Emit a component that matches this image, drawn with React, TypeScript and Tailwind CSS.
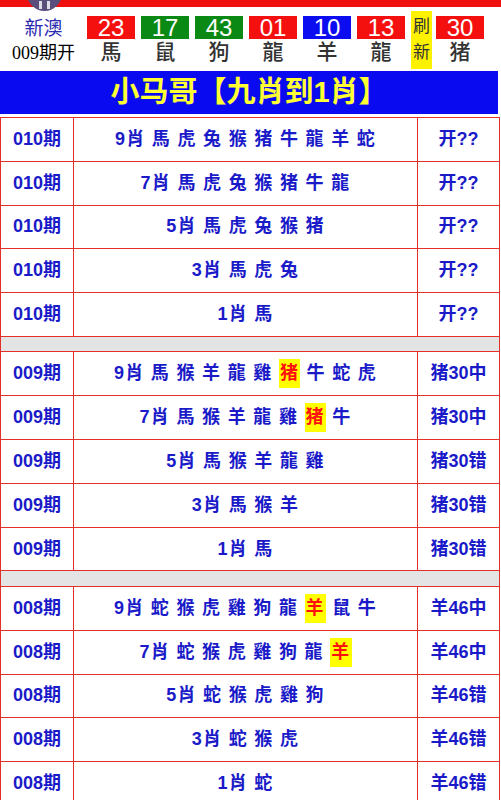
const font = "font-['Liberation_Sans','Noto_Sans_CJK_TC',sans-serif]"

const balls = [
  { n: '23', z: '馬', c: 'bg-[#f51010]' },
  { n: '17', z: '鼠', c: 'bg-[#0a8a14]' },
  { n: '43', z: '狗', c: 'bg-[#0a8a14]' },
  { n: '01', z: '龍', c: 'bg-[#f51010]' },
  { n: '10', z: '羊', c: 'bg-[#0c0cf0]' },
  { n: '13', z: '龍', c: 'bg-[#f51010]' },
]

type Row = { qi: string; picks: string; hit?: string; res: string }

const groups: Row[][] = [
  [
    { qi: '010期', picks: '9肖 馬 虎 兔 猴 猪 牛 龍 羊 蛇', res: '开??' },
    { qi: '010期', picks: '7肖 馬 虎 兔 猴 猪 牛 龍', res: '开??' },
    { qi: '010期', picks: '5肖 馬 虎 兔 猴 猪', res: '开??' },
    { qi: '010期', picks: '3肖 馬 虎 兔', res: '开??' },
    { qi: '010期', picks: '1肖 馬', res: '开??' },
  ],
  [
    { qi: '009期', picks: '9肖 馬 猴 羊 龍 雞 猪 牛 蛇 虎', hit: '猪', res: '猪30中' },
    { qi: '009期', picks: '7肖 馬 猴 羊 龍 雞 猪 牛', hit: '猪', res: '猪30中' },
    { qi: '009期', picks: '5肖 馬 猴 羊 龍 雞', res: '猪30错' },
    { qi: '009期', picks: '3肖 馬 猴 羊', res: '猪30错' },
    { qi: '009期', picks: '1肖 馬', res: '猪30错' },
  ],
  [
    { qi: '008期', picks: '9肖 蛇 猴 虎 雞 狗 龍 羊 鼠 牛', hit: '羊', res: '羊46中' },
    { qi: '008期', picks: '7肖 蛇 猴 虎 雞 狗 龍 羊', hit: '羊', res: '羊46中' },
    { qi: '008期', picks: '5肖 蛇 猴 虎 雞 狗', res: '羊46错' },
    { qi: '008期', picks: '3肖 蛇 猴 虎', res: '羊46错' },
    { qi: '008期', picks: '1肖 蛇', res: '羊46错' },
  ],
]

function Picks({ text, hit }: { text: string; hit?: string }) {
  const parts = text.split(' ')
  return (
    <span>
      {parts.map((p, i) => (
        <span key={i}>
          {i > 0 && ' '}
          {hit && p === hit ? (
            <span className="inline-block bg-[#ffff00] text-[#ff1010] leading-[29px] px-[1px]">{p}</span>
          ) : (
            p
          )}
        </span>
      ))}
    </span>
  )
}

export default function App() {
  return (
    <div className={`relative w-[501px] bg-white ${font}`}>
      {/* top bar + avatar */}
      <div className="h-[7px] bg-[#f01010]" />
      <div className="absolute left-[27px] top-[-24px] w-[35px] h-[35px] rounded-full bg-[#5a4f7c] flex items-end justify-center gap-[5px] pb-[2px]">
        <div className="w-[3px] h-[8px] bg-white/80" />
        <div className="w-[3px] h-[8px] bg-white/80" />
      </div>

      {/* 开奖 header */}
      <div className="flex items-center h-[64px] pt-[2px]">
        <div className="w-[87px] flex flex-col items-center">
          <div className="text-[19px] leading-[25px] text-[#2b2bb0]">新澳</div>
          <div className="text-[18px] leading-[24px] text-black font-['Liberation_Serif','Noto_Sans_CJK_SC',serif]">009期开</div>
        </div>
        <div className="flex items-center gap-[6px]">
          {balls.map((b, i) => (
            <div key={i} className="w-[48px] flex flex-col items-center">
              <div className={`w-full h-[23px] ${b.c} text-white text-[24px] leading-[23px] text-center`}>{b.n}</div>
              <div className="text-[21px] leading-[26px] text-[#333] font-medium">{b.z}</div>
            </div>
          ))}
          <div className="w-[21px] h-[58px] bg-[#fff200] flex flex-col items-center justify-center text-[17px] leading-[26px] text-[#333]">
            <span>刷</span>
            <span>新</span>
          </div>
          <div className="w-[48px] flex flex-col items-center -ml-[2px]">
            <div className="w-full h-[23px] bg-[#f51010] text-white text-[24px] leading-[23px] text-center">30</div>
            <div className="text-[21px] leading-[26px] text-[#333] font-medium">猪</div>
          </div>
        </div>
      </div>

      {/* title banner */}
      <div className="w-[498px] h-[43px] bg-[#0a0af0] flex items-center justify-center">
        <span className="text-[29px] font-bold text-[#ffff33] leading-none">小马哥【九肖到1肖】</span>
      </div>

      {/* table */}
      <div className="mt-[3px] w-[500px] border-t border-l border-r border-[#e3302a] text-[#1a1ac8] font-semibold text-[18px]">
        {groups.map((g, gi) => (
          <div key={gi}>
            {gi > 0 && <div className="h-[15.5px] bg-[#e4e4e4] border-b border-[#e3302a]" />}
            {g.map((r, ri) => (
              <div key={ri} className="flex h-[43.8px] border-b border-[#e3302a]">
                <div className="w-[73px] border-r border-[#e3302a] flex items-center justify-center">{r.qi}</div>
                <div className="flex-1 border-r border-[#e3302a] flex items-center justify-center tracking-[1.3px] whitespace-pre">
                  <Picks text={r.picks} hit={r.hit} />
                </div>
                <div className="w-[81px] flex items-center justify-center">{r.res}</div>
              </div>
            ))}
          </div>
        ))}
      </div>
    </div>
  )
}
